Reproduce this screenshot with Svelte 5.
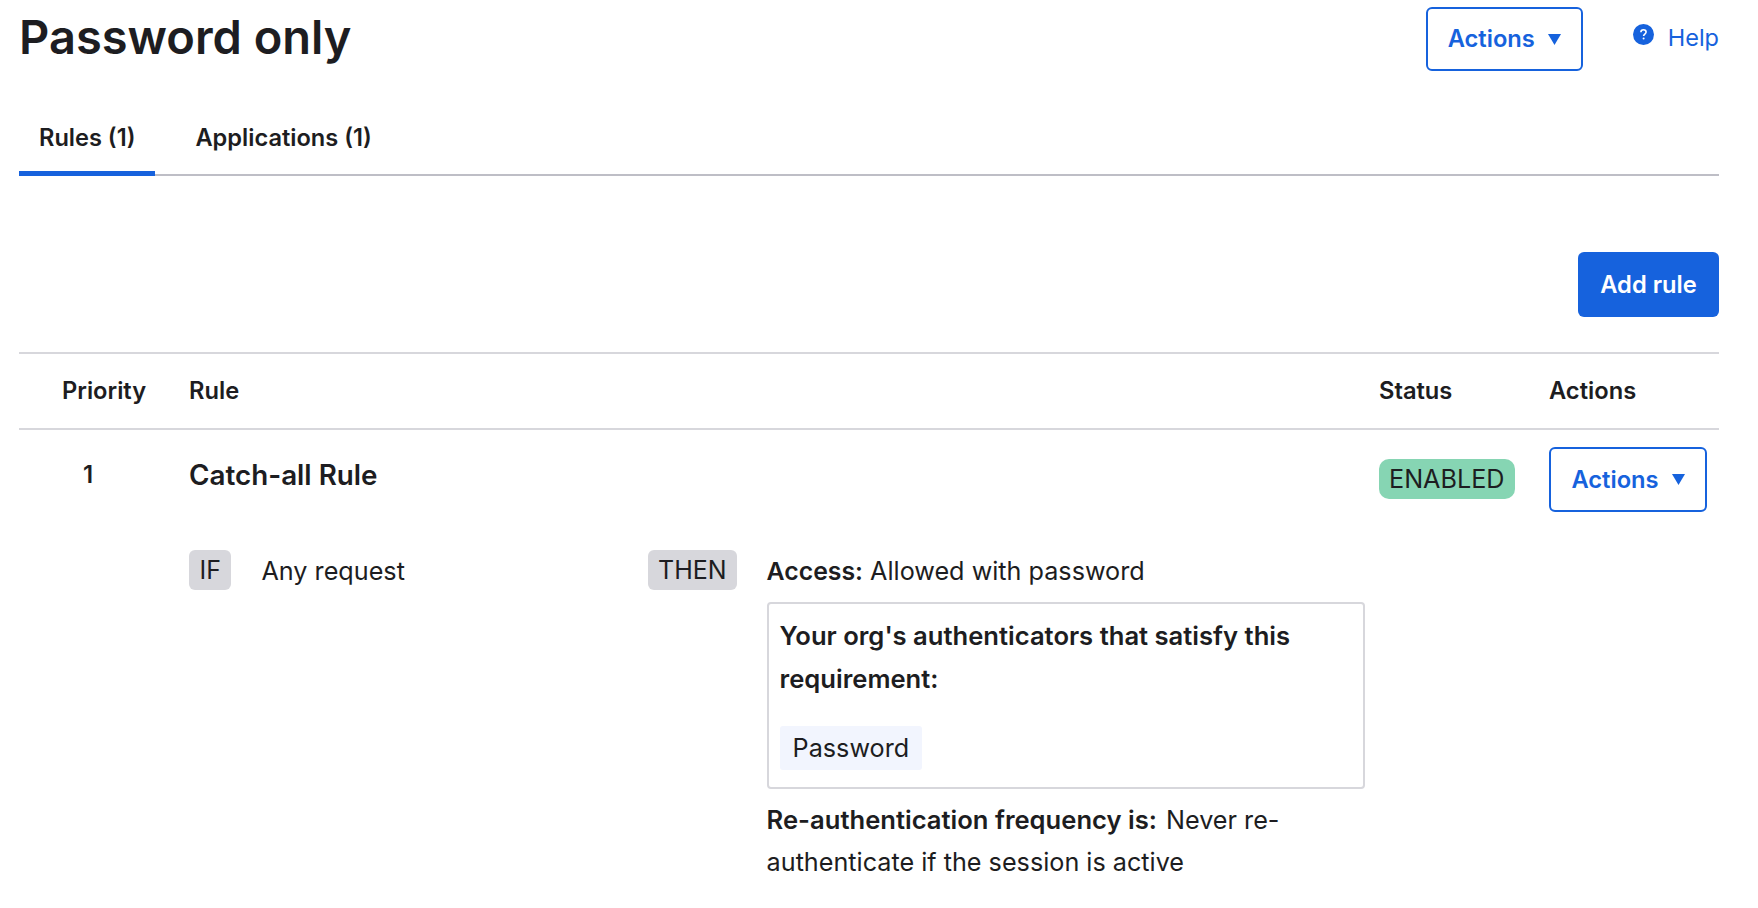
<script>
  const tabs = [
    { label: 'Rules (1)', active: true },
    { label: 'Applications (1)', active: false }
  ];
</script>

<div class="page">
  <header class="top">
    <h1>Password only</h1>
    <div class="top-actions">
      <button class="outline">Actions
        <svg class="caret" viewBox="0 0 13 11"><polygon points="0,0 13,0 6.5,11" /></svg>
      </button>
      <a class="help" href="#help">
        <svg viewBox="0 0 21 21" width="21" height="21">
          <circle cx="10.5" cy="10.5" r="10.5" fill="#1662dd" />
          <path d="M7.9 8.2c0-1.5 1.1-2.5 2.6-2.5s2.6.9 2.6 2.3c0 2-2.5 2-2.5 3.9" fill="none" stroke="#fff" stroke-width="1.6" />
          <circle cx="10.6" cy="14.6" r="1" fill="#fff" />
        </svg>
        Help
      </a>
    </div>
  </header>

  <nav class="tabs">
    {#each tabs as tab}
      <div class="tab" class:active={tab.active}>{tab.label}</div>
    {/each}
  </nav>

  <div class="toolbar">
    <button class="primary">Add rule</button>
  </div>

  <div class="table-head">
    <div class="priority">Priority</div>
    <div>Rule</div>
    <div>Status</div>
    <div>Actions</div>
  </div>

  <div class="table-row">
    <div class="num">1</div>
    <div class="rule">
      <div class="rule-name">Catch-all Rule</div>
      <div class="conditions">
        <div class="cond-if">
          <span class="tag wide">IF</span>
          <span class="line">Any request</span>
        </div>
        <div class="cond-then">
          <span class="tag">THEN</span>
          <div class="then-body">
            <div class="line"><b class="access">Access:</b> Allowed with password</div>
            <div class="box">
              <b>Your org's authenticators that satisfy this requirement:</b>
              <span class="chip">Password</span>
            </div>
            <div class="line"><b>Re-authentication frequency is:</b> Never re-authenticate if the session is active</div>
          </div>
        </div>
      </div>
    </div>
    <div class="status"><span class="badge">ENABLED</span></div>
    <div>
      <button class="outline small">Actions
        <svg class="caret" viewBox="0 0 13 11"><polygon points="0,0 13,0 6.5,11" /></svg>
      </button>
    </div>
  </div>
</div>

<style>
  :global(body) {
    background: #fff;
    color: #1d1d21;
    font-family: Inter, "Liberation Sans", sans-serif;
    font-size: 25.2px;
    line-height: 43px;
  }

  .page {
    padding: 0 39px 0 19px;
    height: 908px;
    box-sizing: border-box;
    overflow: hidden;
  }

  .top {
    display: flex;
    justify-content: space-between;
    height: 96px;
  }

  h1 {
    margin: 0;
    font-size: 47px;
    font-weight: 600;
    line-height: 74px;
  }

  .top-actions {
    display: flex;
    align-items: flex-start;
    padding-top: 7px;
    gap: 50px;
  }

  button {
    font: inherit;
    font-size: 23.7px;
    font-weight: 600;
    line-height: 1;
    border-radius: 6px;
    cursor: pointer;
  }

  .outline {
    width: 157px;
    height: 64px;
    background: #fff;
    color: #1662dd;
    border: 2px solid #1662dd;
    display: flex;
    align-items: center;
    justify-content: center;
    gap: 13px;
    padding: 0;
  }

  .outline.small {
    width: 158px;
    height: 65px;
  }

  .caret {
    width: 13px;
    height: 11px;
    fill: #1662dd;
  }

  .help {
    display: flex;
    align-items: flex-start;
    gap: 14px;
    padding-top: 9px;
    font-size: 23.5px;
    color: #1662dd;
    text-decoration: none;
  }

  .help svg {
    margin-top: 8px;
  }

  .tabs {
    display: flex;
    height: 78px;
    border-bottom: 2px solid #bebec6;
    gap: 20px;
  }

  .tab {
    padding: 0 20px;
    height: 78px;
    box-sizing: border-box;
    line-height: 84px;
    font-size: 23.6px;
    font-weight: 600;
  }

  .tab.active {
    border-bottom: 5px solid #1662dd;
    height: 80px;
  }

  .toolbar {
    display: flex;
    justify-content: flex-end;
    padding-top: 76px;
    height: 100px;
  }

  .primary {
    width: 141px;
    height: 65px;
    background: #1662dd;
    color: #fff;
    border: 0;
  }

  .table-head,
  .table-row {
    display: grid;
    grid-template-columns: 170px 1190px 170px 1fr;
  }

  .table-head {
    height: 74px;
    border-top: 2px solid #d7d7dc;
    border-bottom: 2px solid #d7d7dc;
    line-height: 74px;
    font-size: 23.7px;
    font-weight: 600;
  }

  .priority {
    padding-left: 43px;
  }

  .num {
    padding-left: 64px;
    padding-top: 23px;
    font-size: 24px;
    font-weight: 600;
  }

  .rule-name {
    padding-top: 24px;
    font-weight: 600;
    font-size: 27.8px;
  }

  .conditions {
    display: grid;
    grid-template-columns: 459px 1fr;
    padding-top: 53px;
  }

  .cond-if,
  .cond-then {
    display: flex;
    align-items: flex-start;
  }

  .cond-if { gap: 30px; }
  .cond-then { gap: 30px; }

  .tag {
    background: #d7d7dc;
    border-radius: 6px;
    padding: 0 10px;
    height: 40px;
    line-height: 40px;
    font-size: 25px;
  }

  .tag.wide {
    padding: 0 10.5px;
  }

  .line {
    line-height: 42px;
  }

  .line b {
    margin-right: 2px;
  }

  .line b.access {
    font-size: 24.8px;
    margin-right: 0;
  }

  .then-body {
    width: 598px;
  }

  b {
    font-size: 25.6px;
    font-weight: 600;
  }

  .box {
    margin: 10px 0 10px;
    border: 2px solid #d7d7dc;
    border-radius: 4px;
    padding: 10px 11px 16px;
    height: 187px;
    box-sizing: border-box;
  }

  .box b {
    display: block;
    margin-bottom: 26px;
  }

  .chip {
    display: block;
    width: max-content;
    background: #f2f5fe;
    border-radius: 3px;
    padding: 0 13px;
    height: 44px;
    line-height: 44px;
  }

  .status {
    padding-top: 28px;
  }

  .table-row > div:last-child {
    padding-top: 17px;
  }

  .badge {
    display: inline-block;
    background: #86d5b3;
    border-radius: 10px;
    padding: 0 10px;
    height: 40px;
    line-height: 40px;
  }
</style>
